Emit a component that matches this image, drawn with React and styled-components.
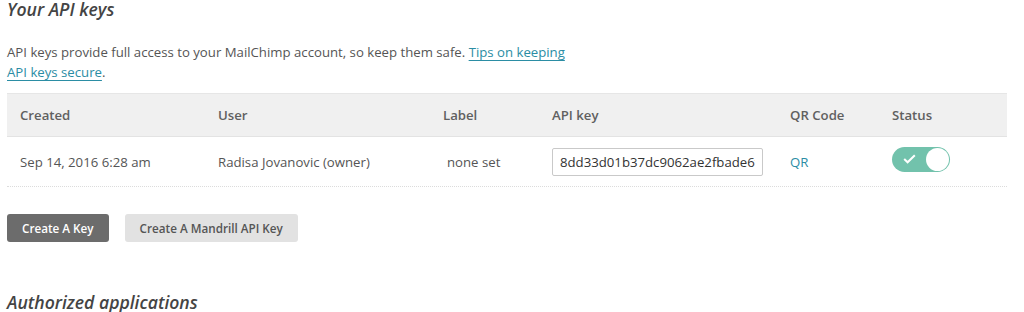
import React from "react";
import styled, { createGlobalStyle } from "styled-components";

const GlobalStyle = createGlobalStyle`
  body {
    margin: 0;
    background: #fff;
    font-family: "Open Sans", "Liberation Sans", sans-serif;
    color: #555;
    overflow: hidden;
  }
`;

const keys = [
  {
    created: "Sep 14, 2016 6:28 am",
    user: "Radisa Jovanovic (owner)",
    label: "none set",
    key: "8dd33d01b37dc9062ae2fbade6f1e3c2-us14",
    enabled: true,
  },
];

const App = () => {
  return (
    <>
      <GlobalStyle />
      <Page>
        <Title>Your API keys</Title>
        <Intro>
          API keys provide full access to your MailChimp account, so keep them
          safe. <Link href="#">Tips on keeping API keys secure</Link>.
        </Intro>

        <Table>
          <HeadRow>
            <HeadCell>Created</HeadCell>
            <HeadCell>User</HeadCell>
            <HeadCell>Label</HeadCell>
            <HeadCell>API key</HeadCell>
            <HeadCell>QR Code</HeadCell>
            <HeadCell>Status</HeadCell>
          </HeadRow>
          {keys.map((k) => (
            <Row key={k.key}>
              <Cell>{k.created}</Cell>
              <Cell>{k.user}</Cell>
              <Cell $indent>{k.label}</Cell>
              <Cell>
                <KeyInput readOnly value={k.key} />
              </Cell>
              <Cell>
                <Link href="#" $plain>
                  QR
                </Link>
              </Cell>
              <Cell>
                <Toggle $on={k.enabled}>
                  <svg width="13" height="10" viewBox="0 0 13 10">
                    <path
                      d="M1.2 5 L4.6 8.3 L11.8 1.2"
                      fill="none"
                      stroke="#fff"
                      strokeWidth="2"
                    />
                  </svg>
                  <Knob />
                </Toggle>
              </Cell>
            </Row>
          ))}
        </Table>

        <Buttons>
          <Button $primary>Create A Key</Button>
          <Button>Create A Mandrill API Key</Button>
        </Buttons>

        <SubTitle>Authorized applications</SubTitle>
      </Page>
    </>
  );
};

const Page = styled.div`
  padding: 0 17px 0 7px;
`;

const Title = styled.h2`
  margin: -3px 0 0;
  font-size: 17.6px;
  line-height: 24px;
  font-style: italic;
  font-weight: 600;
  color: #444;
`;

const SubTitle = styled(Title)`
  margin-top: 48px;
`;

const Intro = styled.p`
  width: 575px;
  margin: 21px 0 11px;
  font-size: 13.2px;
  line-height: 20px;
`;

const Link = styled.a`
  color: #2b8da4;
  text-decoration: ${(p) => (p.$plain ? "none" : "underline")};
  text-underline-offset: 3px;
`;

const Table = styled.div`
  width: 1000px;
`;

const HeadRow = styled.div`
  display: grid;
  grid-template-columns: 198px 225px 109px 238px 102px 1fr;
  align-items: center;
  height: 42px;
  background: #f0f0f0;
  border-top: 1px solid #e6e6e6;
  border-bottom: 1px solid #e3e3e3;
`;

const Row = styled(HeadRow)`
  height: 49px;
  background: #fff;
  border-top: none;
  border-bottom: 1px dotted #dcdcdc;
`;

const HeadCell = styled.div`
  padding: 0 13px;
  font-size: 13.2px;
  font-weight: 600;
  color: #606060;
`;

const Cell = styled.div`
  padding: 0 13px 0 ${(p) => (p.$indent ? "17px" : "13px")};
  font-size: 13.2px;
  color: #555;
  display: flex;
  align-items: center;
`;

const KeyInput = styled.input`
  box-sizing: border-box;
  width: 211px;
  height: 28px;
  padding: 0 7px;
  border: 1px solid #c9c9c9;
  border-radius: 2px;
  font-family: "Open Sans", "Liberation Sans", sans-serif;
  font-size: 13.2px;
  color: #333;
  outline: none;
`;

const Toggle = styled.div`
  box-sizing: border-box;
  width: 58px;
  height: 25px;
  margin-top: -5px;
  border-radius: 13px;
  background: ${(p) => (p.$on ? "#72c2ac" : "#ccc")};
  display: flex;
  align-items: center;
  justify-content: space-between;
  padding: 0 1px 0 11px;
`;

const Knob = styled.span`
  width: 23px;
  height: 23px;
  border-radius: 50%;
  background: #fff;
`;

const Buttons = styled.div`
  display: flex;
  gap: 16px;
  margin-top: 27px;
`;

const Button = styled.button`
  height: 28px;
  padding: 0 15px;
  border: none;
  border-radius: 3px;
  font-family: "Open Sans", "Liberation Sans", sans-serif;
  font-size: 11.7px;
  font-weight: 600;
  background: ${(p) => (p.$primary ? "#6c6c6c" : "#e2e2e2")};
  color: ${(p) => (p.$primary ? "#fff" : "#555")};
  cursor: pointer;
`;

export default App;
